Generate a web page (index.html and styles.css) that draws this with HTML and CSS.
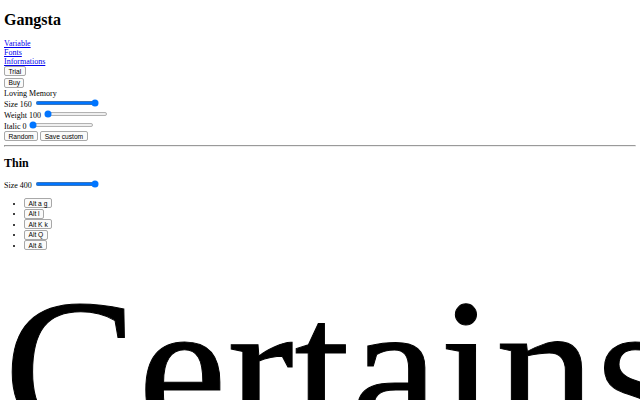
FILE: index.html
```html
<!DOCTYPE html>
<html lang="fr">
<head>
<meta charset="utf-8">
<title>Gangsta</title>
<link rel="stylesheet" href="styles.css">
</head>
<body class="body">
<div class="page">
  <h1 class="title">Gangsta</h1>
  <nav class="nav">
    <div><a href="#" class="link">Variable</a></div>
    <div><a href="#" class="link">Fonts</a></div>
    <div><a href="#" class="link">Informations</a></div>
  </nav>
  <div class="action"><button class="btn">Trial</button></div>
  <div class="action"><button class="btn">Buy</button></div>
  <div class="row">Loving Memory</div>
  <div class="row">Size 160 <input class="range" type="range" min="10" max="160" value="160"></div>
  <div class="row">Weight 100 <input class="range" type="range" min="100" max="900" value="100"></div>
  <div class="row">Italic 0 <input class="range" type="range" min="0" max="1" value="0"></div>
  <div class="row"><button class="btn">Random</button> <button class="btn">Save custom</button></div>
  <hr class="rule">
  <h2 class="subtitle">Thin</h2>
  <div class="row">Size 400 <input class="range" type="range" min="10" max="400" value="400"></div>
  <ul class="alts">
    <li><button class="btn">Alt a g</button></li>
    <li><button class="btn">Alt l</button></li>
    <li><button class="btn">Alt K k</button></li>
    <li><button class="btn">Alt Q</button></li>
    <li><button class="btn">Alt &amp;</button></li>
  </ul>
  <div class="specimen">Certains</div>
</div>
</body>
</html>
```

FILE: styles.css
```css
.body {
  margin: 0;
  overflow: hidden;
  font-family: "Liberation Serif", "Times New Roman", serif;
}
.page {
  zoom: 0.5;
  margin: 8px;
  font-family: "Liberation Serif", "Times New Roman", serif;
  font-size: 16px;
  color: #000;
}
.title {
  font-size: 2em;
  margin: 0.67em 0;
}
.subtitle {
  font-size: 1.5em;
  margin: 18px 0 16px;
}
.link {
  color: #0000ee;
}
.action {
  margin-bottom: 3px;
}
.btn {
  font-family: "Liberation Sans", Helvetica, Arial, sans-serif;
  font-size: 13.33px;
  height: 20px;
  box-sizing: border-box;
  padding: 0 7px;
  margin: 0;
  background: #fafafa;
  border: 1px solid #a8a8a8;
  border-radius: 4px;
  color: #000;
}
.range {
  height: 16px;
  margin: 2px;
}
.alts {
  margin: 16px 0 6px;
  padding-left: 40px;
}
.alts li {
  height: 21px;
}
.specimen {
  font-size: 400px;
  white-space: nowrap;
  letter-spacing: 1px;
  -webkit-text-stroke: 2px #000;
}
```
